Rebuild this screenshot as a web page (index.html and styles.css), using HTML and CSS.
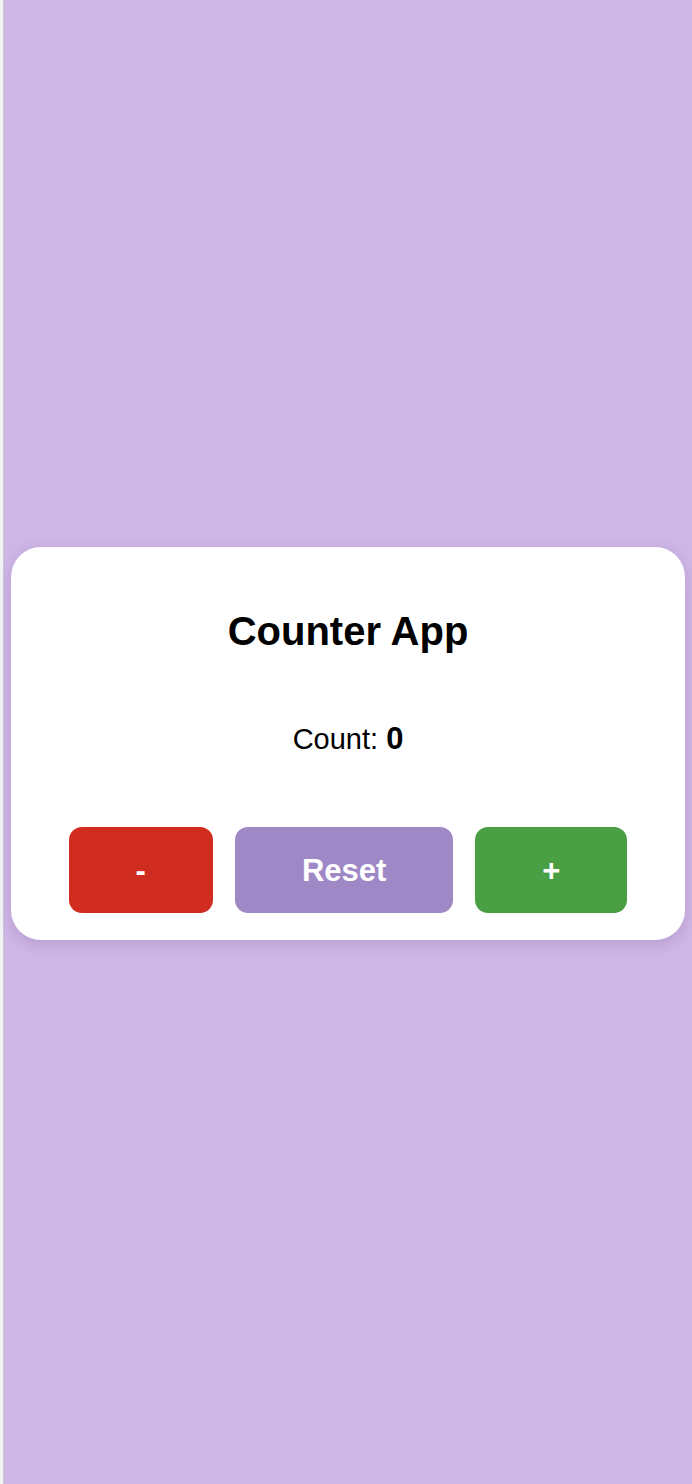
FILE: index.html
```html
<!DOCTYPE html>
<html lang="en">
<head>
<meta charset="utf-8">
<title>Counter App</title>
<link rel="stylesheet" href="styles.css">
</head>
<body>
<div class="page">
  <div class="card">
    <h1 class="title">Counter App</h1>
    <p class="count">Count: <span class="count-value">0</span></p>
    <div class="buttons">
      <button class="btn btn-dec">-</button>
      <button class="btn btn-reset">Reset</button>
      <button class="btn btn-inc">+</button>
    </div>
  </div>
</div>
</body>
</html>
```

FILE: styles.css
```css
html, body {
  margin: 0;
  padding: 0;
  height: 100%;
}

body {
  font-family: "Liberation Sans", Arial, sans-serif;
  background: #ceb6e5;
}

.page {
  min-height: 100%;
  box-sizing: border-box;
  padding: 2px 7px 0 11px;
  display: flex;
  align-items: center;
  box-shadow: inset 3px 0 0 #f3f2f7, inset 4px 0 0 #c9c6d2;
}

.card {
  flex: 1;
  background: #ffffff;
  border-radius: 30px;
  padding: 61px 20px 27px;
  box-shadow: 0 4px 14px rgba(90, 50, 130, 0.18);
  text-align: center;
}

.title {
  margin: 0;
  font-size: 40px;
  line-height: 46px;
  font-weight: 700;
  color: #000;
}

.count {
  margin: 68px 0 71px;
  font-size: 29px;
  line-height: 34px;
  color: #000;
}

.count-value {
  font-weight: 700;
  font-size: 31px;
}

.buttons {
  display: flex;
  justify-content: center;
  gap: 22px;
}

.btn {
  font-family: "Liberation Sans", Arial, sans-serif;
  font-size: 31px;
  font-weight: 700;
  line-height: 36px;
  color: #ffffff;
  border: none;
  border-radius: 13px;
  padding: 26px 67px 24px;
  cursor: pointer;
}

.btn-dec {
  background: #d02c1f;
}

.btn-reset {
  background: #9e88c5;
}

.btn-inc {
  background: #4a9e43;
}
```
